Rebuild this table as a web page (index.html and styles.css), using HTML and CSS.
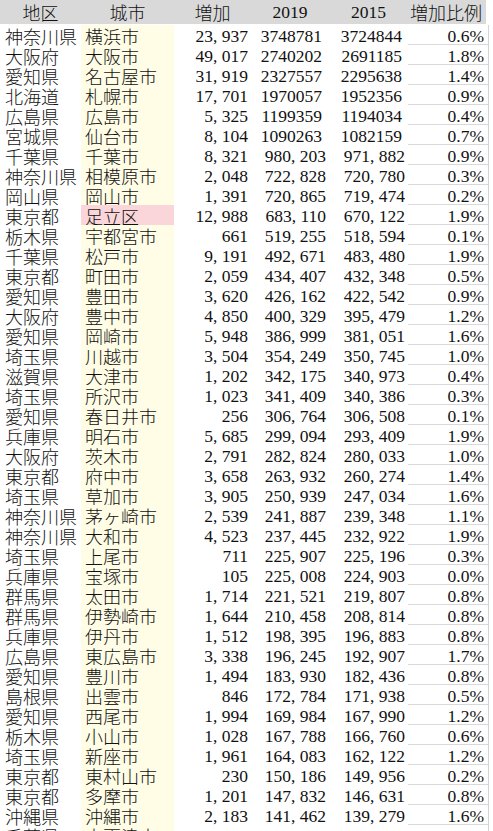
FILE: index.html
```html
<!DOCTYPE html>
<html lang="ja">
<head>
<meta charset="utf-8">
<title>都市人口</title>
<link rel="stylesheet" href="styles.css">
</head>
<body>
<div class="sheet">
  <div class="row head">
    <div class="c-a">地区</div><div class="c-b">城市</div><div class="c-c">増加</div><div class="c-d">2019</div><div class="c-e">2015</div><div class="c-f">増加比例</div>
  </div>
  <div class="row"><div class="c-a">神奈川県</div><div class="c-b">横浜市</div><div class="c-c">23<i>,</i>937</div><div class="c-d g">3748781</div><div class="c-e g">3724844</div><div class="c-f">0.6%</div></div>
  <div class="row"><div class="c-a">大阪府</div><div class="c-b">大阪市</div><div class="c-c">49<i>,</i>017</div><div class="c-d g">2740202</div><div class="c-e g">2691185</div><div class="c-f">1.8%</div></div>
  <div class="row"><div class="c-a">愛知県</div><div class="c-b">名古屋市</div><div class="c-c">31<i>,</i>919</div><div class="c-d g">2327557</div><div class="c-e g">2295638</div><div class="c-f">1.4%</div></div>
  <div class="row"><div class="c-a">北海道</div><div class="c-b">札幌市</div><div class="c-c">17<i>,</i>701</div><div class="c-d g">1970057</div><div class="c-e g">1952356</div><div class="c-f">0.9%</div></div>
  <div class="row"><div class="c-a">広島県</div><div class="c-b">広島市</div><div class="c-c">5<i>,</i>325</div><div class="c-d g">1199359</div><div class="c-e g">1194034</div><div class="c-f">0.4%</div></div>
  <div class="row"><div class="c-a">宮城県</div><div class="c-b">仙台市</div><div class="c-c">8<i>,</i>104</div><div class="c-d g">1090263</div><div class="c-e g">1082159</div><div class="c-f">0.7%</div></div>
  <div class="row"><div class="c-a">千葉県</div><div class="c-b">千葉市</div><div class="c-c">8<i>,</i>321</div><div class="c-d">980<i>,</i>203</div><div class="c-e">971<i>,</i>882</div><div class="c-f">0.9%</div></div>
  <div class="row"><div class="c-a">神奈川県</div><div class="c-b">相模原市</div><div class="c-c">2<i>,</i>048</div><div class="c-d">722<i>,</i>828</div><div class="c-e">720<i>,</i>780</div><div class="c-f">0.3%</div></div>
  <div class="row"><div class="c-a">岡山県</div><div class="c-b">岡山市</div><div class="c-c">1<i>,</i>391</div><div class="c-d">720<i>,</i>865</div><div class="c-e">719<i>,</i>474</div><div class="c-f">0.2%</div></div>
  <div class="row"><div class="c-a">東京都</div><div class="c-b hl">足立区</div><div class="c-c">12<i>,</i>988</div><div class="c-d">683<i>,</i>110</div><div class="c-e">670<i>,</i>122</div><div class="c-f">1.9%</div></div>
  <div class="row"><div class="c-a">栃木県</div><div class="c-b">宇都宮市</div><div class="c-c">661</div><div class="c-d">519<i>,</i>255</div><div class="c-e">518<i>,</i>594</div><div class="c-f">0.1%</div></div>
  <div class="row"><div class="c-a">千葉県</div><div class="c-b">松戸市</div><div class="c-c">9<i>,</i>191</div><div class="c-d">492<i>,</i>671</div><div class="c-e">483<i>,</i>480</div><div class="c-f">1.9%</div></div>
  <div class="row"><div class="c-a">東京都</div><div class="c-b">町田市</div><div class="c-c">2<i>,</i>059</div><div class="c-d">434<i>,</i>407</div><div class="c-e">432<i>,</i>348</div><div class="c-f">0.5%</div></div>
  <div class="row"><div class="c-a">愛知県</div><div class="c-b">豊田市</div><div class="c-c">3<i>,</i>620</div><div class="c-d">426<i>,</i>162</div><div class="c-e">422<i>,</i>542</div><div class="c-f">0.9%</div></div>
  <div class="row"><div class="c-a">大阪府</div><div class="c-b">豊中市</div><div class="c-c">4<i>,</i>850</div><div class="c-d">400<i>,</i>329</div><div class="c-e">395<i>,</i>479</div><div class="c-f">1.2%</div></div>
  <div class="row"><div class="c-a">愛知県</div><div class="c-b">岡崎市</div><div class="c-c">5<i>,</i>948</div><div class="c-d">386<i>,</i>999</div><div class="c-e">381<i>,</i>051</div><div class="c-f">1.6%</div></div>
  <div class="row"><div class="c-a">埼玉県</div><div class="c-b">川越市</div><div class="c-c">3<i>,</i>504</div><div class="c-d">354<i>,</i>249</div><div class="c-e">350<i>,</i>745</div><div class="c-f">1.0%</div></div>
  <div class="row"><div class="c-a">滋賀県</div><div class="c-b">大津市</div><div class="c-c">1<i>,</i>202</div><div class="c-d">342<i>,</i>175</div><div class="c-e">340<i>,</i>973</div><div class="c-f">0.4%</div></div>
  <div class="row"><div class="c-a">埼玉県</div><div class="c-b">所沢市</div><div class="c-c">1<i>,</i>023</div><div class="c-d">341<i>,</i>409</div><div class="c-e">340<i>,</i>386</div><div class="c-f">0.3%</div></div>
  <div class="row"><div class="c-a">愛知県</div><div class="c-b">春日井市</div><div class="c-c">256</div><div class="c-d">306<i>,</i>764</div><div class="c-e">306<i>,</i>508</div><div class="c-f">0.1%</div></div>
  <div class="row"><div class="c-a">兵庫県</div><div class="c-b">明石市</div><div class="c-c">5<i>,</i>685</div><div class="c-d">299<i>,</i>094</div><div class="c-e">293<i>,</i>409</div><div class="c-f">1.9%</div></div>
  <div class="row"><div class="c-a">大阪府</div><div class="c-b">茨木市</div><div class="c-c">2<i>,</i>791</div><div class="c-d">282<i>,</i>824</div><div class="c-e">280<i>,</i>033</div><div class="c-f">1.0%</div></div>
  <div class="row"><div class="c-a">東京都</div><div class="c-b">府中市</div><div class="c-c">3<i>,</i>658</div><div class="c-d">263<i>,</i>932</div><div class="c-e">260<i>,</i>274</div><div class="c-f">1.4%</div></div>
  <div class="row"><div class="c-a">埼玉県</div><div class="c-b">草加市</div><div class="c-c">3<i>,</i>905</div><div class="c-d">250<i>,</i>939</div><div class="c-e">247<i>,</i>034</div><div class="c-f">1.6%</div></div>
  <div class="row"><div class="c-a">神奈川県</div><div class="c-b">茅ヶ崎市</div><div class="c-c">2<i>,</i>539</div><div class="c-d">241<i>,</i>887</div><div class="c-e">239<i>,</i>348</div><div class="c-f">1.1%</div></div>
  <div class="row"><div class="c-a">神奈川県</div><div class="c-b">大和市</div><div class="c-c">4<i>,</i>523</div><div class="c-d">237<i>,</i>445</div><div class="c-e">232<i>,</i>922</div><div class="c-f">1.9%</div></div>
  <div class="row"><div class="c-a">埼玉県</div><div class="c-b">上尾市</div><div class="c-c">711</div><div class="c-d">225<i>,</i>907</div><div class="c-e">225<i>,</i>196</div><div class="c-f">0.3%</div></div>
  <div class="row"><div class="c-a">兵庫県</div><div class="c-b">宝塚市</div><div class="c-c">105</div><div class="c-d">225<i>,</i>008</div><div class="c-e">224<i>,</i>903</div><div class="c-f">0.0%</div></div>
  <div class="row"><div class="c-a">群馬県</div><div class="c-b">太田市</div><div class="c-c">1<i>,</i>714</div><div class="c-d">221<i>,</i>521</div><div class="c-e">219<i>,</i>807</div><div class="c-f">0.8%</div></div>
  <div class="row"><div class="c-a">群馬県</div><div class="c-b">伊勢崎市</div><div class="c-c">1<i>,</i>644</div><div class="c-d">210<i>,</i>458</div><div class="c-e">208<i>,</i>814</div><div class="c-f">0.8%</div></div>
  <div class="row"><div class="c-a">兵庫県</div><div class="c-b">伊丹市</div><div class="c-c">1<i>,</i>512</div><div class="c-d">198<i>,</i>395</div><div class="c-e">196<i>,</i>883</div><div class="c-f">0.8%</div></div>
  <div class="row"><div class="c-a">広島県</div><div class="c-b">東広島市</div><div class="c-c">3<i>,</i>338</div><div class="c-d">196<i>,</i>245</div><div class="c-e">192<i>,</i>907</div><div class="c-f">1.7%</div></div>
  <div class="row"><div class="c-a">愛知県</div><div class="c-b">豊川市</div><div class="c-c">1<i>,</i>494</div><div class="c-d">183<i>,</i>930</div><div class="c-e">182<i>,</i>436</div><div class="c-f">0.8%</div></div>
  <div class="row"><div class="c-a">島根県</div><div class="c-b">出雲市</div><div class="c-c">846</div><div class="c-d">172<i>,</i>784</div><div class="c-e">171<i>,</i>938</div><div class="c-f">0.5%</div></div>
  <div class="row"><div class="c-a">愛知県</div><div class="c-b">西尾市</div><div class="c-c">1<i>,</i>994</div><div class="c-d">169<i>,</i>984</div><div class="c-e">167<i>,</i>990</div><div class="c-f">1.2%</div></div>
  <div class="row"><div class="c-a">栃木県</div><div class="c-b">小山市</div><div class="c-c">1<i>,</i>028</div><div class="c-d">167<i>,</i>788</div><div class="c-e">166<i>,</i>760</div><div class="c-f">0.6%</div></div>
  <div class="row"><div class="c-a">埼玉県</div><div class="c-b">新座市</div><div class="c-c">1<i>,</i>961</div><div class="c-d">164<i>,</i>083</div><div class="c-e">162<i>,</i>122</div><div class="c-f">1.2%</div></div>
  <div class="row"><div class="c-a">東京都</div><div class="c-b">東村山市</div><div class="c-c">230</div><div class="c-d">150<i>,</i>186</div><div class="c-e">149<i>,</i>956</div><div class="c-f">0.2%</div></div>
  <div class="row"><div class="c-a">東京都</div><div class="c-b">多摩市</div><div class="c-c">1<i>,</i>201</div><div class="c-d">147<i>,</i>832</div><div class="c-e">146<i>,</i>631</div><div class="c-f">0.8%</div></div>
  <div class="row"><div class="c-a">沖縄県</div><div class="c-b">沖縄市</div><div class="c-c">2<i>,</i>183</div><div class="c-d">141<i>,</i>462</div><div class="c-e">139<i>,</i>279</div><div class="c-f">1.6%</div></div>
  <div class="row"><div class="c-a">千葉県</div><div class="c-b">木更津市</div><div class="c-c"></div><div class="c-d"></div><div class="c-e"></div><div class="c-f"></div></div>
</div>
</body>
</html>
```

FILE: styles.css
```css
html, body {
  margin: 0;
  padding: 0;
  background: #ffffff;
}

body {
  color: #111111;
  font-family: "Liberation Serif", "Noto Sans CJK JP", serif;
  font-size: 17.5px;
  overflow: hidden;
}

.sheet {
  display: flex;
  flex-direction: column;
  width: 493px;
}

.row {
  display: grid;
  grid-template-columns: 81px 93px 77px 78px 79px 81px 4px;
  height: 20px;
}

.row > div {
  box-sizing: border-box;
  height: 20px;
  padding-top: 3px;
  line-height: 17px;
  white-space: nowrap;
  overflow: visible;
}

.row .c-a,
.row .c-b {
  font-family: "Noto Sans CJK JP", sans-serif;
  font-weight: 300;
  font-size: 18px;
  text-align: left;
}

.row .c-a {
  padding-left: 5px;
}

.row .c-b {
  padding-left: 4px;
  background: #fffde6;
}

.row .c-b.hl {
  background: #fad5da;
}

.row .c-c,
.row .c-d,
.row .c-e,
.row .c-f {
  text-align: right;
}

.row .c-c {
  padding-right: 3px;
}

.row .c-d {
  padding-right: 3px;
}

.row .c-d.g {
  padding-right: 7px;
}

.row .c-e {
  padding-right: 3px;
}

.row .c-e.g {
  padding-right: 6px;
}

.row .c-f {
  padding-right: 4px;
  border-bottom: 1px solid #d9d9d9;
  border-right: 1px solid #d4d4d4;
}

.row i {
  font-style: normal;
  margin-right: 0.25em;
}

.row.head {
  height: 25px;
}

.row.head > div {
  height: 24px;
  padding-top: 2px;
  line-height: 20px;
  text-align: center;
  font-family: "Noto Sans CJK JP", sans-serif;
  font-weight: 300;
  font-size: 18px;
  padding-left: 0;
  padding-right: 0;
  background: #d9d9d9;
  border: 0;
}

.row.head .c-d,
.row.head .c-e {
  font-family: "Liberation Serif", serif;
  font-weight: 400;
  font-size: 17.5px;
}

.row.head .c-f {
  text-align: right;
  padding-right: 4px;
  width: 78px;
}
```
